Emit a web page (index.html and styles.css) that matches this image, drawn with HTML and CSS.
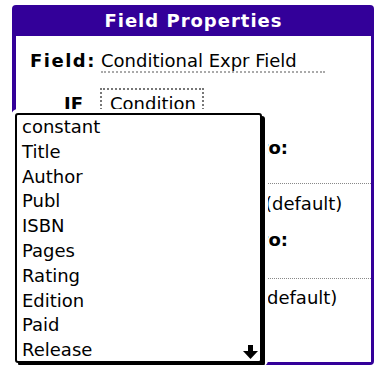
FILE: index.html
```html
<!DOCTYPE html>
<html>
<head>
<meta charset="utf-8">
<link rel="stylesheet" href="styles.css">
</head>
<body>
<div class="dialog">
  <div class="title">Field Properties</div>
  <div class="body">
    <div class="row field-row"><span class="label field-label">Field:</span><span class="field-value">Conditional Expr Field</span></div>
    <div class="row if-row"><span class="label if-label">IF</span><span class="cond">Condition</span></div>
    <div class="row set-row"><span class="label">THEN set to:</span></div>
    <div class="sep sep1"></div>
    <div class="row val-row val1">(default)</div>
    <div class="row set-row set2"><span class="label">ELSE set to:</span></div>
    <div class="sep sep2"></div>
    <div class="row val-row val2">(default)</div>
  </div>
  <div class="popup">
    <ul class="items">
      <li>constant</li>
      <li>Title</li>
      <li>Author</li>
      <li>Publ</li>
      <li>ISBN</li>
      <li>Pages</li>
      <li>Rating</li>
      <li>Edition</li>
      <li>Paid</li>
      <li>Release</li>
    </ul>
    <svg class="scroll-arrow" width="15" height="14" viewBox="0 0 15 14"><rect x="5" y="0" width="5" height="7" fill="#000"/><polygon points="0,6 15,6 7.5,14" fill="#000"/></svg>
  </div>
</div>
</body>
</html>
```
FILE: styles.css
```css
body {
  margin: 0;
  background: #fff;
  font-family: "DejaVu Sans", "Noto Sans", sans-serif;
  color: #000;
}
.dialog {
  position: relative;
  margin: 5px 1px 0 12px;
  width: 362px;
  height: 360px;
  box-sizing: border-box;
  background: #330099;
  border-radius: 4px;
  padding: 0 3px 3px 4px;
  display: flex;
  flex-direction: column;
}
.title {
  height: 31px;
  line-height: 31px;
  text-align: center;
  color: #fff;
  font-weight: bold;
  font-size: 18px;
  letter-spacing: 1px;
}
.body {
  flex: 1;
  background: #fff;
  display: flex;
  flex-direction: column;
}
.row {
  height: 24px;
  line-height: 24px;
  font-size: 18px;
  white-space: nowrap;
}
.label {
  font-weight: bold;
}
.field-row {
  margin-top: 13px;
  display: flex;
  padding-left: 14px;
}
.field-label {
  width: 71px;
  letter-spacing: 1.5px;
}
.field-value {
  display: block;
  width: 224px;
  height: 22px;
  border-bottom: 2px dotted #aaa;
}
.if-row {
  margin-top: 19px;
  display: flex;
  padding-left: 48px;
}
.if-label {
  width: 36px;
}
.cond {
  display: block;
  box-sizing: border-box;
  width: 104px;
  height: 30px;
  margin-top: -4px;
  padding: 2px 0 0 8px;
  border: 2px dotted #777;
}
.set-row {
  margin-top: 20px;
  text-align: right;
  padding-right: 83px;
}
.set2 {
  margin-top: 12px;
}
.sep {
  height: 0;
  border-top: 1px dotted #888;
}
.sep1 {
  margin-top: 23px;
}
.sep2 {
  margin-top: 26px;
}
.val1 {
  margin-top: 8px;
  padding-left: 249px;
}
.val2 {
  margin-top: 7px;
  padding-left: 244px;
}
.popup {
  position: absolute;
  left: 3px;
  top: 108px;
  width: 247px;
  height: 250px;
  box-sizing: border-box;
  border: 2px solid #000;
  border-radius: 3px;
  background: #fff;
  box-shadow: 3px 3px 0 #000, 0 0 0 4px #fff, 2px 0 0 4px #fff;
  overflow: hidden;
}
.items {
  list-style: none;
  margin: 0;
  padding: 0 0 0 5px;
}
.items li {
  height: 24.8px;
  line-height: 24.8px;
  font-size: 18px;
}
.scroll-arrow {
  position: absolute;
  right: 2px;
  bottom: 2px;
}
```
